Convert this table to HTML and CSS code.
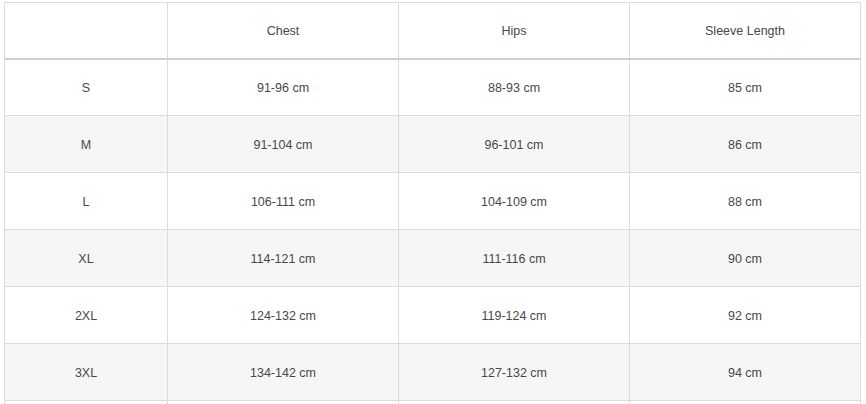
FILE: index.html
```html
<!DOCTYPE html>
<html>
<head>
<meta charset="utf-8">
<link rel="stylesheet" href="styles.css">
</head>
<body>
<table class="size-table">
  <thead>
    <tr><th class="col-size"></th><th>Chest</th><th>Hips</th><th>Sleeve Length</th></tr>
  </thead>
  <tbody>
    <tr><td>S</td><td>91-96 cm</td><td>88-93 cm</td><td>85 cm</td></tr>
    <tr><td>M</td><td>91-104 cm</td><td>96-101 cm</td><td>86 cm</td></tr>
    <tr><td>L</td><td>106-111 cm</td><td>104-109 cm</td><td>88 cm</td></tr>
    <tr><td>XL</td><td>114-121 cm</td><td>111-116 cm</td><td>90 cm</td></tr>
    <tr><td>2XL</td><td>124-132 cm</td><td>119-124 cm</td><td>92 cm</td></tr>
    <tr><td>3XL</td><td>134-142 cm</td><td>127-132 cm</td><td>94 cm</td></tr>
    <tr class="row-more"><td></td><td></td><td></td><td></td></tr>
  </tbody>
</table>
</body>
</html>
```
FILE: styles.css
```css
html, body {
  margin: 0;
  padding: 0;
  background: #fff;
  overflow: hidden;
}
body {
  padding: 2px 0 0 4px;
  font-family: "Liberation Sans", Arial, sans-serif;
  font-size: 12.5px;
  color: #484848;
}
.size-table {
  border-collapse: collapse;
  width: 857px;
  table-layout: fixed;
}
.size-table th,
.size-table td {
  border: 1px solid #dcdcdc;
  text-align: center;
  vertical-align: middle;
  font-weight: normal;
  height: 57px;
  padding: 1px 0 0;
  box-sizing: border-box;
}
.size-table th {
  height: 56px;
  border-bottom: 2px solid #cfcfcf;
}
.size-table .col-size {
  width: 163px;
}
.size-table tbody tr:nth-child(even) td {
  background: #f6f6f6;
}
```
